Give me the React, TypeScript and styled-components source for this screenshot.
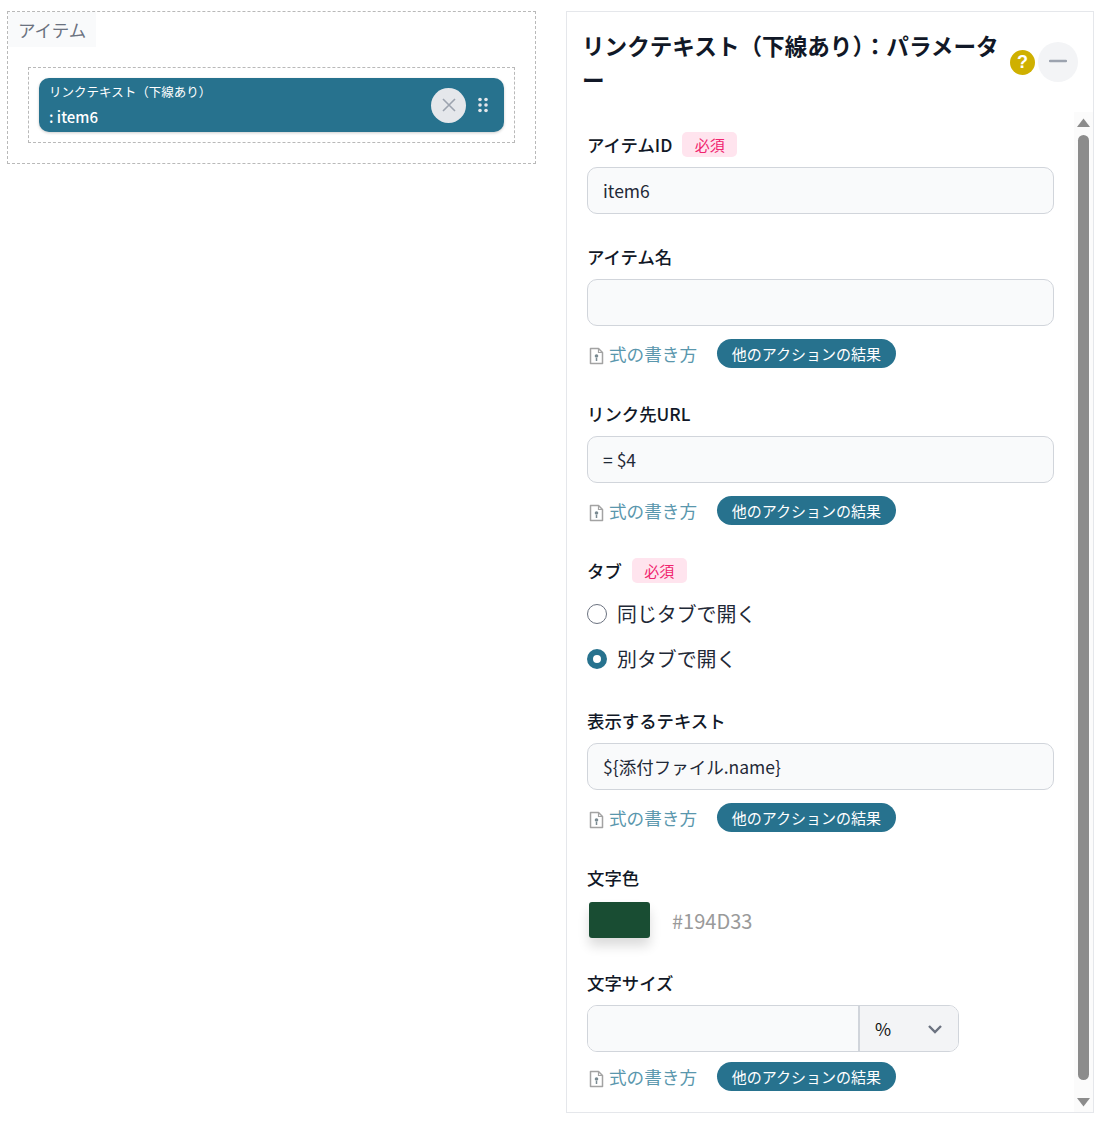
import React from "react";
import styled, { createGlobalStyle } from "styled-components";

const GlobalStyle = createGlobalStyle`
  html, body {
    margin: 0;
    padding: 0;
    background: #fff;
    font-family: "Noto Sans CJK JP", "Noto Sans", sans-serif;
    color: #1f2937;
  }
  * { box-sizing: border-box; }
`;

const TEAL = "#27728e";

const Page = styled.div`
  display: flex;
  align-items: flex-start;
  width: 1106px;
  height: 1124px;
  padding: 11px 12px 0 7px;
  gap: 30px;
`;

const ItemPanel = styled.section`
  width: 529px;
  height: 153px;
  border: 1px dashed #b9b9b9;
`;

const ItemTitle = styled.div`
  width: 88px;
  height: 35px;
  background: #f9fafb;
  color: #6b7280;
  font-size: 17.5px;
  line-height: 35px;
  padding-left: 10px;
`;

const DropZone = styled.div`
  margin: 20px 20px 0;
  height: 76px;
  border: 1px dashed #b9b9b9;
  padding: 10px;
`;

const ItemCard = styled.div`
  display: flex;
  align-items: center;
  height: 54px;
  border-radius: 10px;
  background: ${TEAL};
  color: #fff;
  padding: 0 16px 0 10px;
  box-shadow: 0 1px 3px rgba(0, 0, 0, 0.2);
`;

const ItemText = styled.div`
  flex: 1;
  min-width: 0;
`;

const ItemKind = styled.div`
  font-size: 12.5px;
  line-height: 18px;
`;

const ItemName = styled.div`
  font-size: 15px;
  font-weight: 500;
  line-height: 22px;
  margin-top: 5px;
`;

const CloseButton = styled.div`
  display: flex;
  align-items: center;
  justify-content: center;
  width: 35px;
  height: 35px;
  border-radius: 50%;
  background: #e5e7eb;
  margin-right: 12px;
`;

const ParamPanel = styled.section`
  display: flex;
  flex-direction: column;
  width: 528px;
  height: 1102px;
  border: 1px solid #e5e7eb;
`;

const PanelHeader = styled.header`
  display: flex;
  align-items: center;
  height: 100px;
  padding: 17px 15px 0 15px;
  flex-shrink: 0;
`;

const PanelTitle = styled.h2`
  flex: 1;
  min-width: 0;
  margin: 0;
  padding-right: 10px;
  font-size: 22.6px;
  font-weight: 700;
  line-height: 34px;
  color: #111827;
  align-self: flex-start;
`;

const HelpBadge = styled.div`
  display: flex;
  align-items: center;
  justify-content: center;
  width: 25px;
  height: 25px;
  border-radius: 50%;
  background: #cfb000;
  color: #fff;
  font-family: "Liberation Sans", sans-serif;
  font-size: 18px;
  font-weight: 700;
  margin: -17px 3px 0 0;
`;

const CollapseButton = styled.div`
  display: flex;
  align-items: center;
  justify-content: center;
  width: 40px;
  height: 40px;
  border-radius: 50%;
  background: #f3f4f6;
  margin-top: -17px;
  padding-bottom: 3px;
`;

const PanelBody = styled.div`
  flex: 1;
  display: flex;
  min-height: 0;
`;

const Form = styled.div`
  flex: 1;
  min-width: 0;
  padding: 20px 20px 0;
`;

const Field = styled.div<{ $gap?: number }>`
  margin-bottom: ${(p) => p.$gap ?? 30}px;
`;

const LabelRow = styled.div`
  display: flex;
  align-items: center;
  gap: 10px;
  height: 25px;
  margin-bottom: 10px;
`;

const Label = styled.label`
  font-size: 17.4px;
  font-weight: 500;
  line-height: 25px;
  color: #111827;
`;

const RequiredTag = styled.span`
  display: inline-flex;
  align-items: center;
  justify-content: center;
  width: 55px;
  height: 25px;
  border-radius: 5px;
  background: #ffe4ee;
  color: #f0246e;
  font-size: 15px;
  padding-bottom: 1px;
`;

const TextInput = styled.input`
  display: block;
  width: 100%;
  height: 47px;
  padding: 0 15px;
  border: 1px solid #d1d5db;
  border-radius: 10px;
  background: #f9fafb;
  color: #1f2937;
  font-family: inherit;
  font-size: 17.5px;
  outline: none;
`;

const HelperRow = styled.div<{ $top?: number }>`
  display: flex;
  align-items: center;
  height: 29px;
  margin-top: ${(p) => p.$top ?? 13}px;
  padding-left: 2px;
`;

const HowToLink = styled.a`
  display: flex;
  align-items: center;
  gap: 5px;
  width: 128px;
  color: #5a97ad;
  font-size: 17.6px;
`;

const ResultPill = styled.span`
  display: inline-flex;
  align-items: center;
  justify-content: center;
  width: 179px;
  height: 29px;
  border-radius: 15px;
  background: ${TEAL};
  color: #fff;
  font-size: 15px;
`;

const RadioGroup = styled.div`
  margin-top: -2px;
`;

const RadioRow = styled.div`
  display: flex;
  align-items: center;
  gap: 10px;
  height: 45px;
  font-size: 19.9px;
  color: #1f2937;
`;

const RadioMark = styled.span<{ $checked?: boolean }>`
  width: 20px;
  height: 20px;
  border-radius: 50%;
  background: #fff;
  border: ${(p) => (p.$checked ? `6px solid ${TEAL}` : "1.5px solid #6b7280")};
`;

const ColorRow = styled.div`
  display: flex;
  align-items: center;
  gap: 22px;
  margin-top: 12px;
  padding-left: 2px;
`;

const ColorSwatch = styled.div`
  width: 61px;
  height: 36px;
  border-radius: 3px;
  background: #194d33;
  box-shadow: 0 8px 12px rgba(0, 0, 0, 0.14);
`;

const ColorValue = styled.span`
  font-size: 20px;
  color: #9a9a9a;
`;

const SizeGroup = styled.div`
  display: flex;
  width: 372px;
  height: 47px;
  border: 1px solid #d1d5db;
  border-radius: 10px;
  overflow: hidden;
`;

const SizeInput = styled.input`
  width: 272px;
  border: 0;
  border-right: 2px solid #d1d5db;
  background: #f9fafb;
  outline: none;
`;

const UnitSelect = styled.div`
  flex: 1;
  display: flex;
  align-items: center;
  justify-content: space-between;
  padding: 0 15px 0 15px;
  background: #f3f4f6;
  color: #111;
  font-size: 17.5px;
`;

const ScrollRail = styled.div`
  display: flex;
  flex-direction: column;
  align-items: center;
  width: 19px;
  background: #fbfbfb;
  flex-shrink: 0;
`;

const ScrollArrow = styled.svg`
  display: block;
  flex-shrink: 0;
  margin: 6px 0 8px;
`;

const ScrollArrowDown = styled(ScrollArrow)`
  margin: 0 0 5px;
`;

const ScrollThumb = styled.div`
  width: 11px;
  height: 945px;
  border-radius: 6px;
  background: #8c8c8c;
`;

const RailSpacer = styled.div`
  flex: 1;
`;

const FormulaIcon = () => (
  <svg width="15" height="18" viewBox="0 0 15 18" fill="none" style={{ marginTop: 4 }}>
    <path d="M1.5 1.5h8l4 4v11h-12z" stroke="#a3a3a3" strokeWidth="1.5" strokeLinejoin="round" />
    <path d="M9.5 1.5v4h4" stroke="#a3a3a3" strokeWidth="1.2" />
    <path d="M7.5 14v-3" stroke="#7a8b92" strokeWidth="1.5" />
    <circle cx="7.5" cy="9" r="1.8" fill="#7a8b92" />
  </svg>
);

const Helper = ({ top }: { top?: number }) => (
  <HelperRow $top={top}>
    <HowToLink>
      <FormulaIcon />
      式の書き方
    </HowToLink>
    <ResultPill>他のアクションの結果</ResultPill>
  </HelperRow>
);

const App = () => {
  return (
    <Page>
      <GlobalStyle />
      <ItemPanel>
        <ItemTitle>アイテム</ItemTitle>
        <DropZone>
          <ItemCard>
            <ItemText>
              <ItemKind>リンクテキスト（下線あり）</ItemKind>
              <ItemName>: item6</ItemName>
            </ItemText>
            <CloseButton>
              <svg width="16" height="16" viewBox="0 0 16 16">
                <path d="M2 2l12 12M14 2L2 14" stroke="#9ca3af" strokeWidth="1.6" />
              </svg>
            </CloseButton>
            <svg width="10" height="16" viewBox="0 0 10 16" fill="#e5e7eb">
              <circle cx="2" cy="2.5" r="1.8" />
              <circle cx="8" cy="2.5" r="1.8" />
              <circle cx="2" cy="8" r="1.8" />
              <circle cx="8" cy="8" r="1.8" />
              <circle cx="2" cy="13.5" r="1.8" />
              <circle cx="8" cy="13.5" r="1.8" />
            </svg>
          </ItemCard>
        </DropZone>
      </ItemPanel>

      <ParamPanel>
        <PanelHeader>
          <PanelTitle>リンクテキスト（下線あり）：パラメーター</PanelTitle>
          <HelpBadge>?</HelpBadge>
          <CollapseButton>
            <svg width="18" height="4" viewBox="0 0 18 4">
              <path d="M1 2h16" stroke="#9ca3af" strokeWidth="2.4" strokeLinecap="round" />
            </svg>
          </CollapseButton>
        </PanelHeader>

        <PanelBody>
          <Form>
            <Field>
              <LabelRow>
                <Label>アイテムID</Label>
                <RequiredTag>必須</RequiredTag>
              </LabelRow>
              <TextInput readOnly value="item6" />
            </Field>

            <Field $gap={33}>
              <LabelRow>
                <Label>アイテム名</Label>
              </LabelRow>
              <TextInput readOnly value="" />
              <Helper />
            </Field>

            <Field $gap={33}>
              <LabelRow>
                <Label>リンク先URL</Label>
              </LabelRow>
              <TextInput readOnly value="= $4" />
              <Helper />
            </Field>

            <Field $gap={27}>
              <LabelRow>
                <Label>タブ</Label>
                <RequiredTag>必須</RequiredTag>
              </LabelRow>
              <RadioGroup>
                <RadioRow>
                  <RadioMark />
                  同じタブで開く
                </RadioRow>
                <RadioRow>
                  <RadioMark $checked />
                  別タブで開く
                </RadioRow>
              </RadioGroup>
            </Field>

            <Field $gap={33}>
              <LabelRow>
                <Label>表示するテキスト</Label>
              </LabelRow>
              <TextInput readOnly value="${添付ファイル.name}" />
              <Helper />
            </Field>

            <Field $gap={32}>
              <LabelRow>
                <Label>文字色</Label>
              </LabelRow>
              <ColorRow>
                <ColorSwatch />
                <ColorValue>#194D33</ColorValue>
              </ColorRow>
            </Field>

            <Field>
              <LabelRow>
                <Label>文字サイズ</Label>
              </LabelRow>
              <SizeGroup>
                <SizeInput readOnly value="" />
                <UnitSelect>
                  %
                  <svg width="16" height="10" viewBox="0 0 16 10" fill="none">
                    <path d="M2 2l6 6 6-6" stroke="#6b7280" strokeWidth="2.4" />
                  </svg>
                </UnitSelect>
              </SizeGroup>
              <Helper top={10} />
            </Field>
          </Form>

          <ScrollRail>
            <ScrollArrow width="13" height="9" viewBox="0 0 13 9">
              <path d="M6.5 0.5L13 9H0z" fill="#8c8c8c" />
            </ScrollArrow>
            <ScrollThumb />
            <RailSpacer />
            <ScrollArrowDown width="13" height="9" viewBox="0 0 13 9">
              <path d="M6.5 8.5L0 0h13z" fill="#8c8c8c" />
            </ScrollArrowDown>
          </ScrollRail>
        </PanelBody>
      </ParamPanel>
    </Page>
  );
};

export default App;
